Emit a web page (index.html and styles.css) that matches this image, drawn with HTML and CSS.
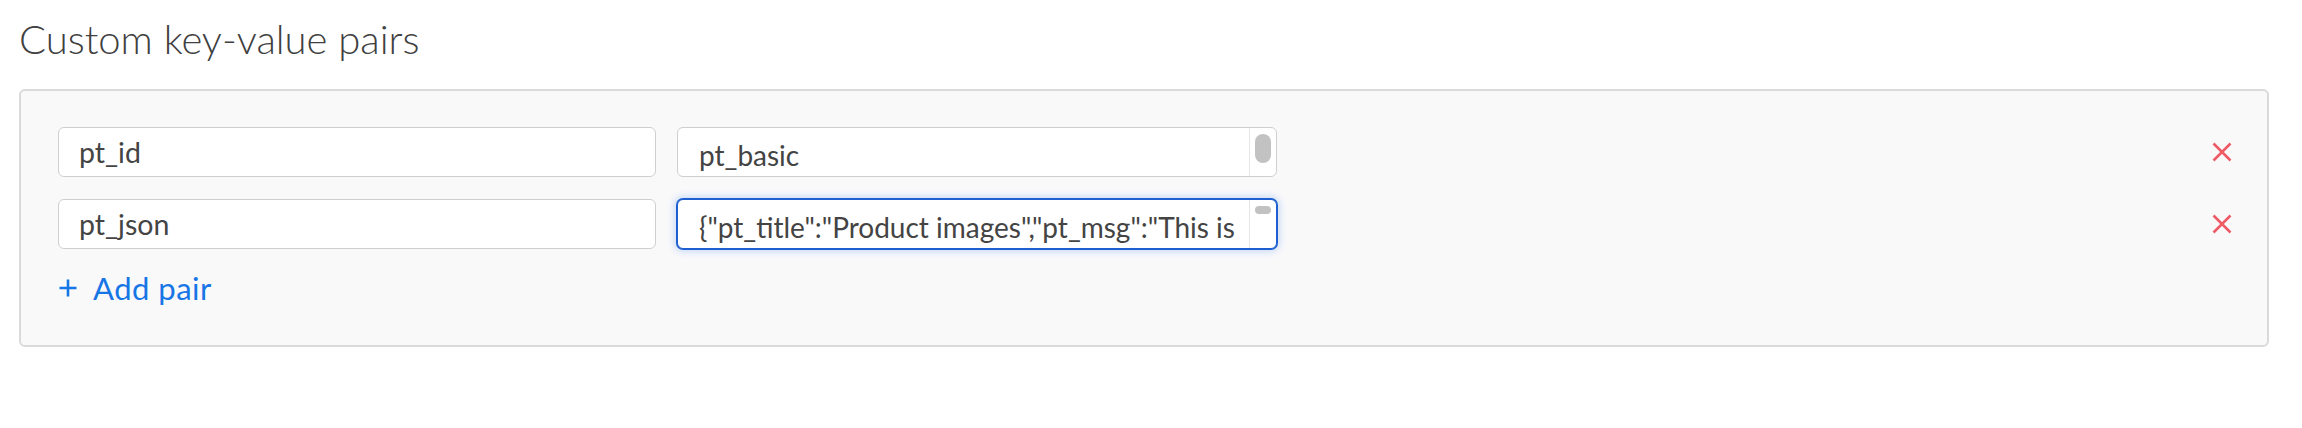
FILE: index.html
```html
<!DOCTYPE html>
<html lang="en">
<head>
<meta charset="utf-8">
<title>Custom key-value pairs</title>
<link rel="stylesheet" href="styles.css">
</head>
<body>
<h2 class="title">Custom key-value pairs</h2>
<div class="panel">
  <div class="pair">
    <input class="key" type="text" value="pt_id">
    <div class="value">
      <textarea class="value-text" rows="1">pt_basic
</textarea>
      <div class="track"><div class="thumb thumb-long"></div></div>
    </div>
    <button class="remove" aria-label="Remove pair">
      <svg viewBox="0 0 20 20" width="20" height="20"><path d="M1.5 1.5 L18.5 18.5 M18.5 1.5 L1.5 18.5" /></svg>
    </button>
  </div>
  <div class="pair">
    <input class="key" type="text" value="pt_json">
    <div class="value focused">
      <textarea class="value-text" rows="1">{"pt_title":"Product images","pt_msg":"This is
a rich push notification with images"}</textarea>
      <div class="track"><div class="thumb thumb-short"></div></div>
    </div>
    <button class="remove" aria-label="Remove pair">
      <svg viewBox="0 0 20 20" width="20" height="20"><path d="M1.5 1.5 L18.5 18.5 M18.5 1.5 L1.5 18.5" /></svg>
    </button>
  </div>
  <button class="add">
    <svg class="plus" viewBox="0 0 20 20" width="20" height="20"><path d="M10 1.5 V18.5 M1.5 10 H18.5" /></svg>
    <span>Add pair</span>
  </button>
</div>
</body>
</html>
```

FILE: styles.css
```css
html, body {
  margin: 0;
  padding: 0;
  background: #ffffff;
}
body {
  width: 2302px;
  font-family: "Lato", "Liberation Sans", sans-serif;
  color: #444444;
}
.title {
  margin: 0 0 25px 0;
  padding: 14px 0 0 19px;
  font-size: 40px;
  line-height: 50px;
  font-weight: 300;
  color: #404040;
}
.panel {
  margin: 0 33px 0 19px;
  border: 2px solid #dadada;
  border-radius: 6px;
  background: #f9f9fa;
  padding: 36px 36px 39px 37px;
  display: flex;
  flex-direction: column;
  gap: 22px;
}
.pair {
  display: flex;
  align-items: center;
  height: 50px;
}
.key {
  box-sizing: border-box;
  width: 598px;
  height: 50px;
  margin: 0 21px 0 0;
  padding: 0 20px;
  border: 1px solid #cfcfcf;
  border-radius: 6px;
  background: #ffffff;
  font-family: inherit;
  font-size: 28.5px;
  color: #444444;
  outline: none;
}
.value {
  box-sizing: border-box;
  width: 600px;
  height: 50px;
  display: flex;
  border: 1px solid #cfcfcf;
  border-radius: 6px;
  background: #ffffff;
  overflow: hidden;
}
.value.focused {
  border-color: #1d5fd1;
  box-shadow: 0 0 0 1px #1d5fd1, 0 0 7px 3px rgba(40, 120, 235, 0.22);
}
.value-text {
  flex: 1;
  min-width: 0;
  margin: 0;
  border: 0;
  padding: 10px 8px 0 21px;
  font-family: inherit;
  font-size: 28px;
  line-height: 34px;
  color: #444444;
  background: transparent;
  resize: none;
  overflow: hidden;
  outline: none;
  white-space: pre-wrap;
}
.track {
  width: 27px;
  flex: none;
  border-left: 1px solid #e6e6e6;
  display: flex;
  justify-content: center;
  padding-top: 6px;
  box-sizing: border-box;
}
.thumb {
  width: 16px;
  background: #c2c2c2;
}
.thumb-long {
  height: 29px;
  border-radius: 8px;
}
.thumb-short {
  height: 8px;
  border-radius: 4px;
}
.remove {
  margin-left: auto;
  margin-right: -1px;
  padding: 0;
  border: 0;
  background: none;
  width: 20px;
  height: 20px;
  display: flex;
}
.remove svg path {
  stroke: #ef5a65;
  stroke-width: 2.5;
  fill: none;
}
.add {
  margin-top: -1px;
  align-self: flex-start;
  display: flex;
  align-items: center;
  gap: 15px;
  padding: 0;
  border: 0;
  background: none;
  height: 36px;
  font-family: inherit;
  font-size: 31px;
  letter-spacing: 0.5px;
  color: #1676e6;
}
.plus path {
  stroke: #1676e6;
  stroke-width: 2.6;
  fill: none;
}
```
